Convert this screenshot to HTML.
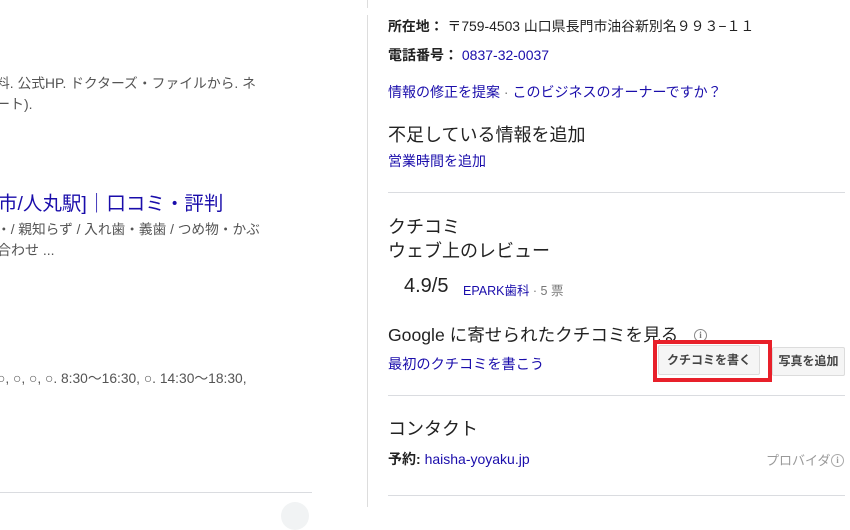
<!DOCTYPE html>
<html><head><meta charset="utf-8"><style>
body{margin:0;width:850px;height:507px;overflow:hidden;background:#fff;font-family:"Liberation Sans","Noto Sans CJK JP",Arial,sans-serif;position:relative}
.a{position:absolute;white-space:nowrap}
.g{color:#545454;font-size:14px}
.l{color:#1a0dab}
.b{font-weight:bold;color:#222}
.h{font-size:18px;color:#222}
.hr{position:absolute;height:1px;background:#dadce0}
.btn{position:absolute;background:#f5f5f5;border:1px solid #dcdcdc;border-radius:2px;font-size:12px;font-weight:bold;color:#444;text-align:center;box-sizing:border-box}
.i{display:inline-block;width:11px;height:11px;border:1.5px solid #888;border-radius:50%;font-size:9px;line-height:11px;text-align:center;color:#777;font-weight:bold;vertical-align:1px;font-family:"Liberation Serif",serif}
</style></head><body>
<div style="position:absolute;left:367px;top:0;width:1px;height:8px;background:#ddd"></div>
<div style="position:absolute;left:367px;top:15px;width:1px;height:492px;background:#ddd"></div>
<div class="hr" style="left:0;top:492px;width:312px"></div>
<div style="position:absolute;left:281px;top:502px;width:28px;height:28px;border-radius:50%;background:#f1f3f4"></div>

<div class="a g" style="left:-4px;top:72px;font-size:13.8px">料. 公式HP. ドクターズ・ファイルから. ネ</div>
<div class="a g" style="left:-4px;top:94px">ート).</div>
<div class="a l" style="left:-2px;top:187px;font-size:19.5px">市/人丸駅]｜口コミ・評判</div>
<div class="a g" style="left:-3px;top:218px;font-size:13.7px">・/ 親知らず / 入れ歯・義歯 / つめ物・かぶ</div>
<div class="a g" style="left:-3px;top:240px">合わせ ...</div>
<div class="a g" style="left:-3px;top:367px;font-size:13.8px">○, ○, ○, ○. 8:30〜16:30, ○. 14:30〜18:30,</div>

<div class="a" style="left:388px;top:16px;font-size:13.9px;color:#222"><span class="b">所在地：</span> 〒759-4503 山口県長門市油谷新別名９９３−１１</div>
<div class="a" style="left:388px;top:45px;font-size:14px"><span class="b">電話番号：</span> <span class="l">0837-32-0037</span></div>
<div class="a l" style="left:388px;top:82px;font-size:14px">情報の修正を提案 <span style="color:#777">·</span> このビジネスのオーナーですか？</div>
<div class="a h" style="left:388px;top:121px">不足している情報を追加</div>
<div class="a l" style="left:388px;top:151px;font-size:14px">営業時間を追加</div>
<div class="hr" style="left:388px;top:192px;width:457px"></div>
<div class="a h" style="left:388px;top:213px">クチコミ</div>
<div class="a h" style="left:388px;top:237px">ウェブ上のレビュー</div>
<div class="a" style="left:404px;top:275px;font-size:20px;color:#222">4.9/5</div>
<div class="a" style="left:463px;top:280px;font-size:12.5px;color:#777"><span class="l">EPARK歯科</span> · 5 票</div>
<div class="a h" style="left:388px;top:322px;font-size:17.6px">Google に寄せられたクチコミを見る</div>
<div class="a" style="left:694px;top:326px"><span class="i">i</span></div>
<div class="a l" style="left:388px;top:354px;font-size:14.2px">最初のクチコミを書こう</div>
<div class="btn" style="left:658px;top:345px;width:102px;height:30px;line-height:28px">クチコミを書く</div>
<div style="position:absolute;left:653px;top:340px;width:111px;height:34px;border:4px solid #e8202a"></div>
<div class="btn" style="left:772px;top:347px;width:73px;height:29px;line-height:27px">写真を追加</div>
<div class="hr" style="left:388px;top:395px;width:457px"></div>
<div class="a h" style="left:388px;top:415px">コンタクト</div>
<div class="a" style="left:388px;top:449px;font-size:14px"><span class="b">予約:</span> <span class="l">haisha-yoyaku.jp</span></div>
<div class="a" style="left:766px;top:450px;font-size:13px;color:#999">プロバイダ</div>
<div class="a" style="left:831px;top:451px"><span class="i" style="border-color:#aaa;color:#999">i</span></div>
<div class="hr" style="left:388px;top:495px;width:457px"></div>
</body></html>
